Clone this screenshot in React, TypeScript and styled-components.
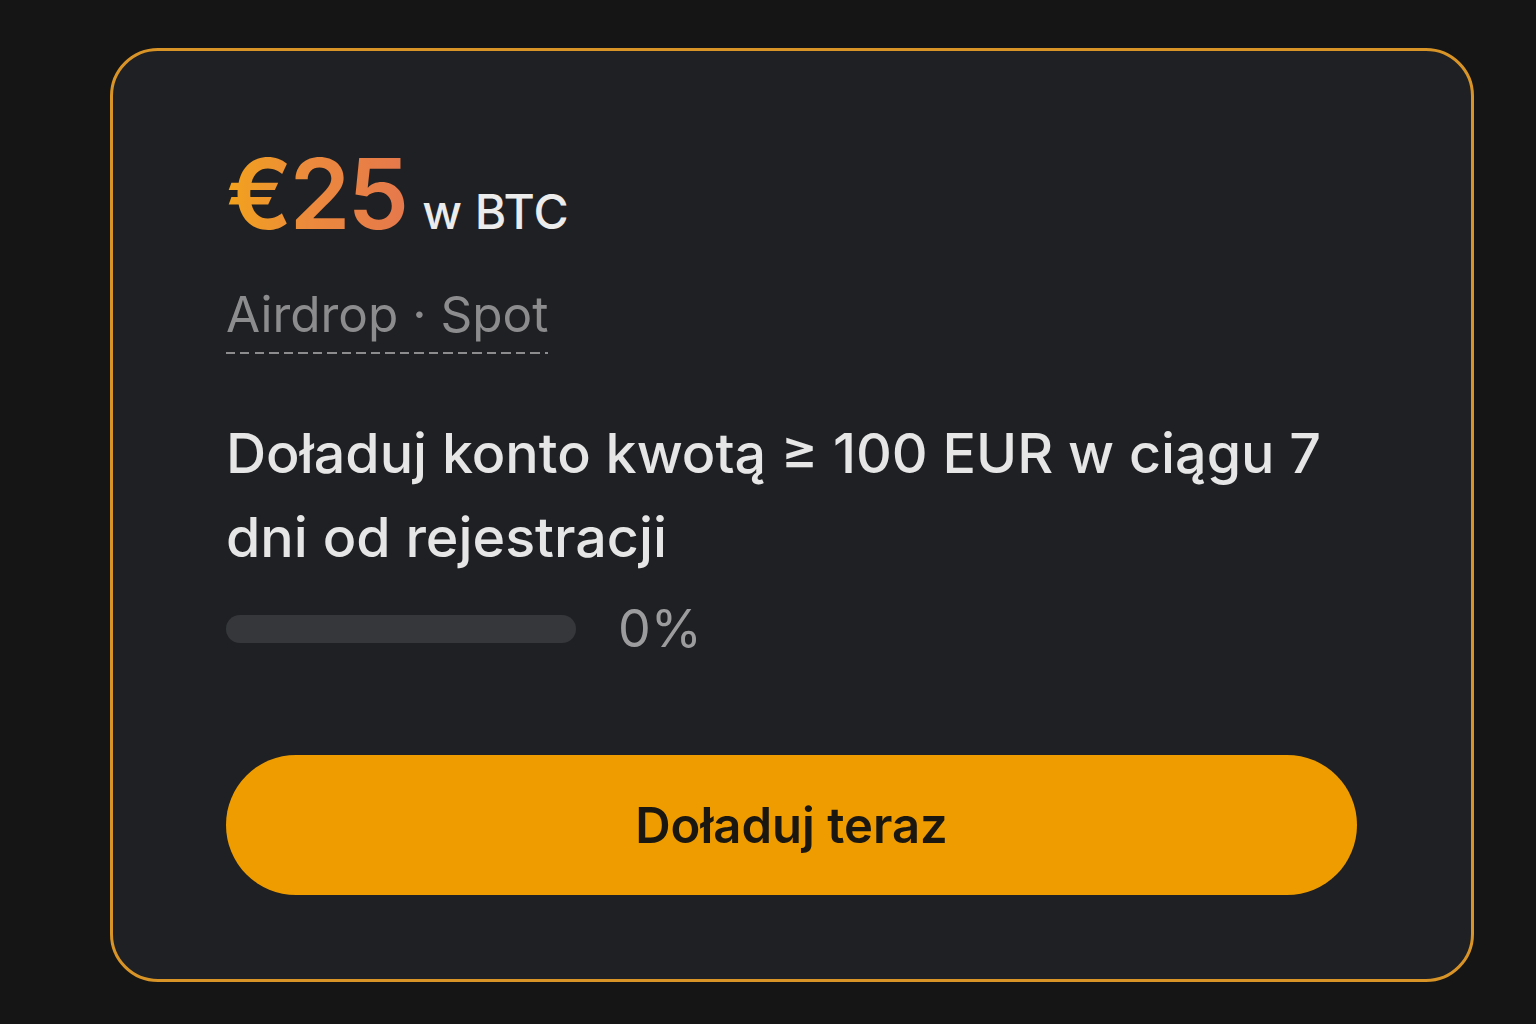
import styled, { createGlobalStyle } from "styled-components";

const Global = createGlobalStyle`
  html, body {
    margin: 0;
    padding: 0;
    background: #151515;
  }
  body {
    font-family: Inter, "Noto Sans", "Liberation Sans", sans-serif;
  }
`;

const Page = styled.div`
  width: 1536px;
  height: 1024px;
  box-sizing: border-box;
  padding: 48px 62px 42px 110px;
  display: flex;
`;

const Card = styled.div`
  flex: 1;
  box-sizing: border-box;
  border: 3px solid #d99427;
  border-radius: 48px;
  background: #1f2023;
  padding: 94px 114px 84px 113px;
  display: flex;
  flex-direction: column;
`;

const Reward = styled.div`
  display: flex;
  align-items: baseline;
  gap: 16px;
`;

const Amount = styled.span`
  font-size: 98px;
  font-weight: 600;
  line-height: 1;
  letter-spacing: -3px;
  background: linear-gradient(90deg, #f2a31c 0%, #ec8a3c 45%, #e6784c 100%);
  -webkit-background-clip: text;
  background-clip: text;
  color: transparent;
`;

const Unit = styled.span`
  font-size: 48px;
  font-weight: 500;
  color: #ececec;
`;

const Tag = styled.div`
  align-self: flex-start;
  margin-top: 42px;
  font-size: 49.5px;
  line-height: 1.2;
  color: #8c8c8e;
  padding-bottom: 10px;
  background: repeating-linear-gradient(
      90deg,
      #8c8c8e 0 9px,
      transparent 9px 14.5px
    )
    bottom left / 100% 2px no-repeat;
`;

const Task = styled.p`
  margin: 57px 0 0;
  font-size: 55.6px;
  font-weight: 500;
  line-height: 84px;
  color: #e6e6e6;
  max-width: 1125px;
`;

const ProgressRow = styled.div`
  display: flex;
  align-items: center;
  gap: 42px;
  margin-top: 18px;
`;

const Track = styled.div`
  width: 350px;
  height: 28px;
  border-radius: 14px;
  background: #35373b;
  overflow: hidden;
`;

const Fill = styled.div`
  height: 100%;
  background: #f09c00;
`;

const Percent = styled.span`
  font-size: 52px;
  color: #9c9c9e;
`;

const Button = styled.button`
  margin-top: auto;
  height: 140px;
  border: none;
  border-radius: 70px;
  background: #ef9c00;
  color: #1a1711;
  font-family: inherit;
  font-size: 49px;
  font-weight: 600;
  cursor: pointer;
`;

export default function App() {
  const progress = 0;
  return (
    <>
      <Global />
      <Page>
        <Card>
          <Reward>
            <Amount>€25</Amount>
            <Unit>w BTC</Unit>
          </Reward>
          <Tag>Airdrop · Spot</Tag>
          <Task>Doładuj konto kwotą ≥ 100 EUR w ciągu 7 dni od rejestracji</Task>
          <ProgressRow>
            <Track>
              <Fill style={{ width: `${progress}%` }} />
            </Track>
            <Percent>{progress}%</Percent>
          </ProgressRow>
          <Button>Doładuj teraz</Button>
        </Card>
      </Page>
    </>
  );
}
